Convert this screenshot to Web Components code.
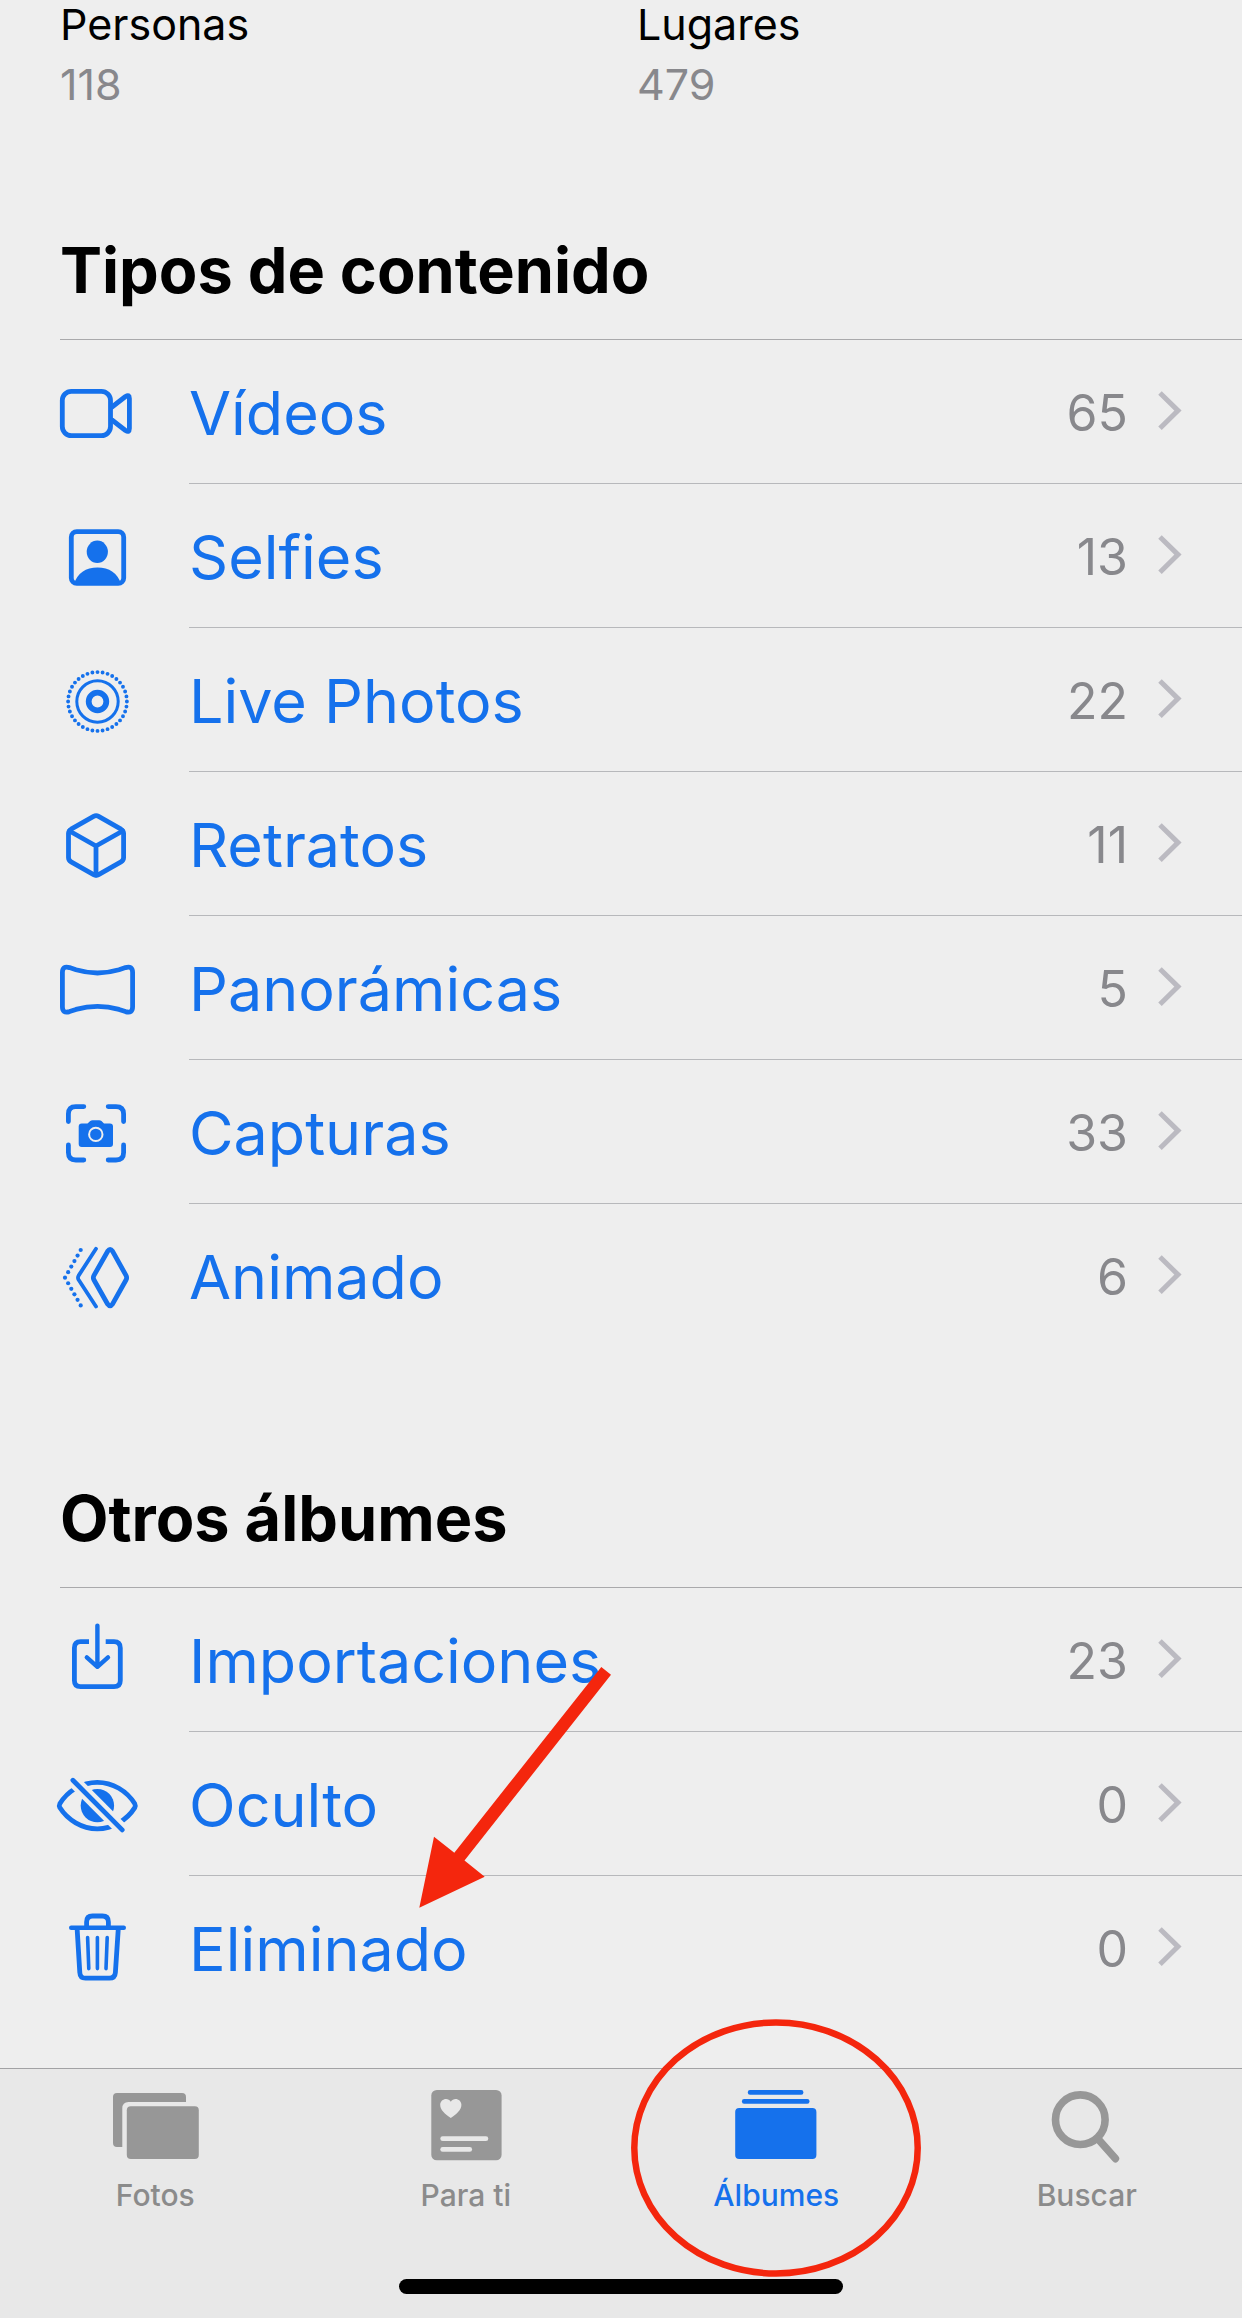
<!DOCTYPE html>
<html lang="es">
<head>
<meta charset="utf-8">
<meta name="viewport" content="width=device-width, initial-scale=1">
<title>Álbumes</title>
<style>
  body { margin: 0; background: #eee; color: #000; font-family: Inter, "Liberation Sans", sans-serif; }
</style>
</head>
<body>
<albums-page>
  <album-stat slot="stats" name="Personas" count="118"></album-stat>
  <album-stat slot="stats" name="Lugares" count="479"></album-stat>

  <album-section heading="Tipos de contenido">
    <album-row icon="video" count="65">Vídeos</album-row>
    <album-row icon="selfie" count="13">Selfies</album-row>
    <album-row icon="live" count="22">Live Photos</album-row>
    <album-row icon="cube" count="11">Retratos</album-row>
    <album-row icon="panorama" count="5">Panorámicas</album-row>
    <album-row icon="capture" count="33">Capturas</album-row>
    <album-row icon="animated" count="6" last>Animado</album-row>
  </album-section>

  <album-section heading="Otros álbumes">
    <album-row icon="import" count="23">Importaciones</album-row>
    <album-row icon="hidden" count="0">Oculto</album-row>
    <album-row icon="trash" count="0" last>Eliminado<marker-arrow slot="marker"></marker-arrow></album-row>
  </album-section>

  <tab-bar slot="tabs">
    <tab-item icon="photos">Fotos</tab-item>
    <tab-item icon="foryou">Para ti</tab-item>
    <tab-item icon="albums" selected>Álbumes<marker-ring slot="marker"></marker-ring></tab-item>
    <tab-item icon="search">Buscar</tab-item>
  </tab-bar>
</albums-page>

<script>
const dots = [];
for (let i = 0; i <= 5; i++) {
  const x = 13 + i * 3.14, dy = i * 5.54;
  dots.push(`<circle cx="${x}" cy="${46.7 - dy}" r="2.1"/>`);
  if (i) dots.push(`<circle cx="${x}" cy="${46.7 + dy}" r="2.1"/>`);
}

const ICONS = {
  video: `<g class="line"><rect x="10.3" y="24.3" width="48.2" height="44.3" rx="9"/><path d="M60 40 73.5 29.5Q77.4 27 77.4 31.5V61.5Q77.4 66 73.5 63.5L60 53"/></g>`,
  selfie: `<rect class="line" x="19.3" y="20.7" width="52.4" height="51.7" rx="5.5"/><ellipse cx="45.3" cy="40.8" rx="10.6" ry="11.2"/><path d="M22 73.5C25 62 34 56.6 45.5 56.6S66 62 69 73.5Z"/>`,
  live: `<g class="line"><circle cx="45.5" cy="46.5" r="29.4" stroke-width="3.9" pathLength="36" stroke-dasharray="0 1"/><circle cx="45.5" cy="46.5" r="20.7" stroke-width="3"/><circle cx="45.5" cy="46.5" r="8.8" stroke-width="5.8"/></g>`,
  cube: `<g class="line"><path d="M41.6 17.4Q44.1 16 46.6 17.4L69 30.2Q71.6 31.8 71.6 34.6V58.6Q71.6 61.4 69 62.9L46.6 75.6Q44.1 77 41.6 75.6L19.1 62.9Q16.5 61.4 16.5 58.6V34.6Q16.5 31.8 19.1 30.2Z"/><path d="M17.5 32 44 47 70.6 32M44 47V76"/></g>`,
  panorama: `<path class="line" d="M10.4 29.5Q10.4 22.5 17.5 24.6L24 26.8Q45.5 33.2 67 26.8L73.5 24.6Q80.6 22.5 80.6 29.5V63.8Q80.6 70.8 73.5 68.6L67 66.4Q45.5 60.2 24 66.4L17.5 68.6Q10.4 70.8 10.4 63.8Z"/>`,
  capture: `<path class="line" d="M16.4 34.6V27Q16.4 19.6 23.8 19.6H31.8M56.2 19.6H64Q71.6 19.6 71.6 27V34.6M71.6 58V65.6Q71.6 73 64 73H56.2M31.8 73H23.8Q16.4 73 16.4 65.6V58"/><path d="M29.7 36.4H35.5L38.2 34Q39.2 33.2 40.5 33.2H47.2Q48.5 33.2 49.5 34L52 36.4H58Q61 36.4 61 39.4V57Q61 60 58 60H29.7Q26.7 60 26.7 57V39.4Q26.7 36.4 29.7 36.4Z"/><circle cx="43.8" cy="47.4" r="6.7" stroke="#eee" stroke-width="2"/>`,
  animated: `<g class="line"><path d="M55.7 20.2Q58.1 16.8 60.5 20.2L74 44.4Q75.3 46.7 74 49L60.5 73.2Q58.1 76.6 55.7 73.2L42 49Q40.7 46.7 42 44.4Z"/><path stroke-width="3.8" d="M44 17.8 26.6 44.6Q25.4 46.7 26.6 48.8L44 75.5"/></g>${dots.join("")}`,
  import: `<g class="line"><path stroke-linecap="butt" style="stroke-linecap:butt" d="M37 26.7H28.6Q22.4 26.7 22.4 33V65.4Q22.4 71.6 28.6 71.6H62Q68.3 71.6 68.3 65.4V33Q68.3 26.7 62 26.7H53.7"/><path stroke-width="4.4" d="M45.4 10.6V51.4M34.8 42.4 45.4 51.8 56 42.4"/></g>`,
  hidden: `<path class="line" d="M7.8 44.8C15.5 32 30 23.3 45.3 23.3S75 32 82.8 44.8Q83.8 46.7 82.8 48.6C75 61 60.6 69.8 45.3 69.8S15.5 61 7.8 48.6Q6.8 46.7 7.8 44.8Z"/><circle cx="45.4" cy="46.6" r="16.7"/><path d="M17 17.3 74 74.7" stroke="#eee" stroke-width="13"/><path class="line" d="M20.9 21.2 70.2 70.9"/>`,
  trash: `<g class="line"><path stroke-width="4.4" d="M19.2 24.8H71.8"/><path d="M34.6 24V19Q34.6 13 40.5 13H50.4Q56.4 13 56.4 19V24M25.2 27 27.8 69.5Q28 75.2 33.5 75.2H57.4Q63 75.2 63.4 69.5L66.2 27"/><path stroke-width="3.6" d="M35.6 34.6 36.8 65.6M45.4 34.6V65.6M55.2 34.6 54 65.6"/></g>`,
  photos: `<path d="M7 5H72Q76 5 76 9V14H18.5Q12.3 14 12.3 20.5V59H7Q3 59 3 55V9Q3 5 7 5Z"/><rect x="16.8" y="18.3" width="72" height="52.7" rx="4"/>`,
  foryou: `<rect x="10.3" y="2" width="70.3" height="70.3" rx="5.5"/><g fill="#e8e8e8"><path d="M29.8 30C24 26 19.2 22 19.2 16.8C19.2 11 26.8 8.8 29.8 13.7C32.8 8.8 40.4 11 40.4 16.8C40.4 22 35.6 26 29.8 30Z"/><rect x="19.3" y="48.3" width="48" height="4.8" rx="2.4"/><rect x="19.3" y="59" width="31.8" height="4.8" rx="2.4"/></g>`,
  albums: `<rect x="16.8" y="2" width="55.6" height="4.7" rx="2.2"/><rect x="10.9" y="11" width="67.6" height="4.8" rx="2.2"/><rect x="4.2" y="20" width="81.2" height="51" rx="4"/>`,
  search: `<g class="line" stroke-width="7.6"><circle cx="38.3" cy="31.7" r="24.8"/><path d="M56.5 51.5 73.4 70.6"/></g>`
};

const define = (name, render) => customElements.define(name, class extends HTMLElement {
  connectedCallback() {
    if (!this.shadowRoot) this.attachShadow({ mode: "open" }).innerHTML = render(this);
  }
});

define("albums-page", () => `
  <style>
    :host { display: flex; flex-direction: column; min-height: 100vh; }
    main { flex: 1; padding-bottom: 48px; }
    .stats { display: grid; grid-template-columns: 577px 1fr; padding: 0 0 122px 60px; }
    .sections { display: flex; flex-direction: column; gap: 130px; }
  </style>
  <main>
    <div class="stats"><slot name="stats"></slot></div>
    <div class="sections"><slot></slot></div>
  </main>
  <slot name="tabs"></slot>`);

define("album-stat", el => `
  <style>
    :host { display: flex; flex-direction: column; gap: 12px; font-size: 43px; line-height: 48px; }
    .count { color: #88888c; }
  </style>
  <span>${el.getAttribute("name")}</span>
  <span class="count">${el.getAttribute("count")}</span>`);

define("album-section", el => `
  <style>
    :host { display: block; }
    h2 { margin: 0 0 0 60px; padding-bottom: 29px; border-bottom: 1px solid #a9a9ab;
         font-size: 63px; line-height: 80px; font-weight: 700; }
  </style>
  <section><h2>${el.getAttribute("heading")}</h2><slot></slot></section>`);

define("photo-icon", el => `
  <style>
    :host { display: block; flex: none; }
    svg { display: block; fill: currentColor; overflow: visible; }
    .line { fill: none; stroke: currentColor; stroke-linecap: round; stroke-linejoin: round; }
  </style>
  <svg width="90" height="${el.getAttribute("height") || 90}" stroke-width="4.8" aria-hidden="true">${ICONS[el.getAttribute("name")]}</svg>`);

define("album-row", el => `
  <style>
    :host { display: block; position: relative; }
    a { display: flex; align-items: center; gap: 47px; padding-left: 52px; color: #1571ec; text-decoration: none; }
    .body { flex: 1; display: flex; align-items: center; box-sizing: border-box; height: 144px;
            padding: 3px 60px 0 0; border-bottom: 1px solid ${el.hasAttribute("last") ? "transparent" : "#b7b8bb"}; }
    .name { flex: 1; font-size: 61px; line-height: 80px; }
    .count { font-size: 50px; line-height: 80px; color: #88888c; margin-right: 30px; }
    .chevron { fill: none; stroke: #bbbac1; stroke-width: 5; }
  </style>
  <a href="#${el.getAttribute("icon")}">
    <photo-icon name="${el.getAttribute("icon")}"></photo-icon>
    <span class="body">
      <span class="name"><slot></slot></span>
      <span class="count">${el.getAttribute("count")}</span>
      <svg class="chevron" width="24" height="46" aria-hidden="true"><path d="M2 3 20 20.6 2 38.2"/></svg>
    </span>
  </a>
  <slot name="marker"></slot>`);

define("tab-bar", () => `
  <style>
    :host { display: block; background: #e8e8e8; border-top: 1px solid #a2a2a4; }
    nav { display: grid; grid-template-columns: repeat(4, 1fr); padding-top: 19px; height: 191px; }
    .home { width: 444px; max-width: 60%; height: 15px; margin: 0 auto 24px; border-radius: 8px; background: #000; }
  </style>
  <nav><slot></slot></nav>
  <div class="home"></div>`);

define("tab-item", el => `
  <style>
    :host { display: block; position: relative; }
    a { display: flex; flex-direction: column; align-items: center; gap: 8px; text-decoration: none;
        color: ${el.hasAttribute("selected") ? "#1571ec" : "#979797"}; }
    .label { font-size: 30px; line-height: 38px; font-weight: 500;
             color: ${el.hasAttribute("selected") ? "#1571ec" : "#8b8b8b"}; }
  </style>
  <a href="#${el.getAttribute("icon")}">
    <photo-icon name="${el.getAttribute("icon")}" height="80"></photo-icon>
    <span class="label"><slot></slot></span>
  </a>
  <slot name="marker"></slot>`);

define("marker-arrow", () => `
  <style>
    :host { position: absolute; left: 419px; bottom: 112px; pointer-events: none; }
    svg { display: block; }
  </style>
  <svg width="192" height="241" fill="#f4260d" aria-hidden="true"><path d="M182.3 0 192 7.7 45.5 193.5 65.7 209.7.3 240.7 15 169.7 35.3 185.7Z"/></svg>`);

define("marker-ring", () => `
  <style>
    :host { position: absolute; left: 50%; top: -69px; transform: translateX(-50%); pointer-events: none; }
    svg { display: block; }
  </style>
  <svg width="290" height="258" fill="none" stroke="#f4260d" stroke-width="6.5" aria-hidden="true"><ellipse cx="145" cy="129" rx="141.7" ry="125.5"/></svg>`);
</script>
</body>
</html>
